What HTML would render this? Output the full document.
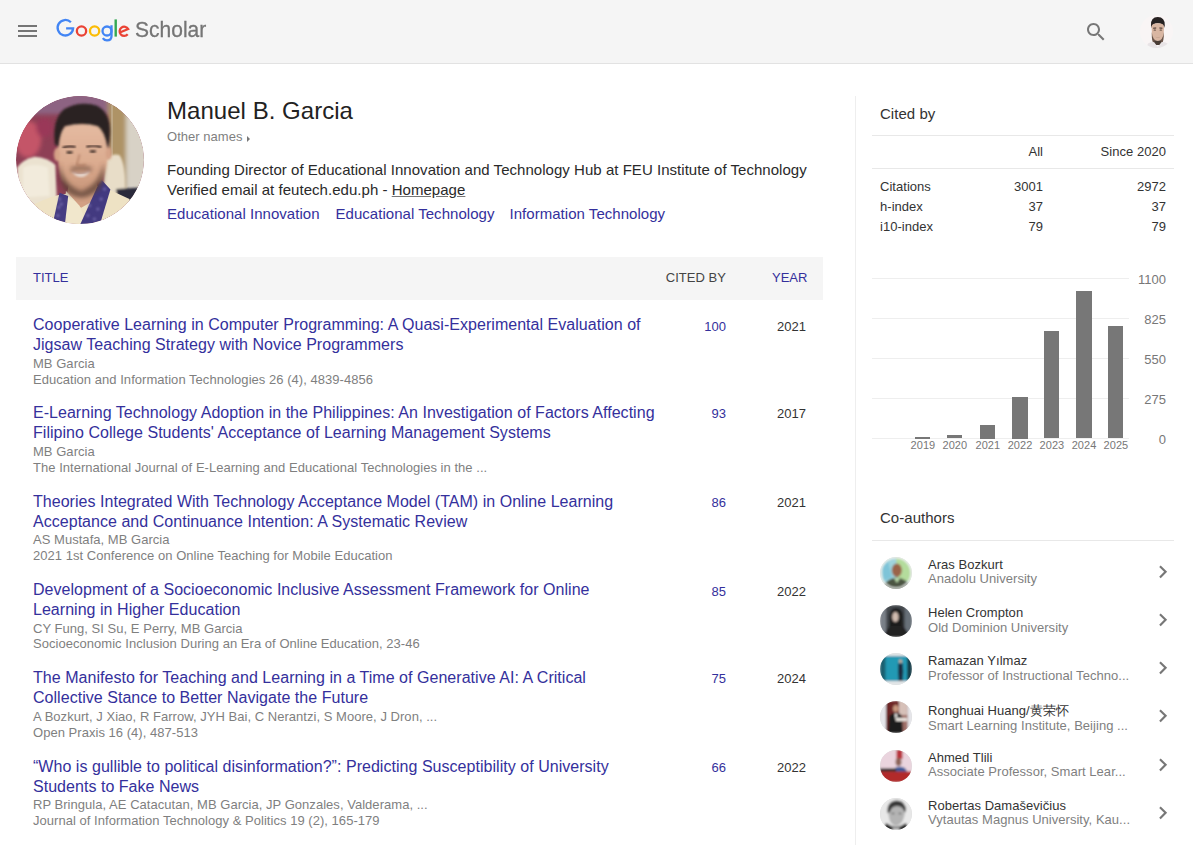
<!DOCTYPE html>
<html><head><meta charset="utf-8">
<style>
*{margin:0;padding:0;box-sizing:border-box}
html,body{width:1193px;height:845px;overflow:hidden;background:#fff}
body{font-family:"Liberation Sans",sans-serif;color:#2e2e2e;position:relative;letter-spacing:0.035px}
.a{position:absolute;white-space:nowrap}
#hdr{position:absolute;left:0;top:0;width:1193px;height:64px;background:#f5f5f5;border-bottom:1px solid #e2e2e2}
.ham{position:absolute;left:18px;width:19px;height:2px;background:#757575}
.lnk{color:#34309c}
.gry{color:#7f7f7f}
.title{color:#34309c;font-size:16px;line-height:20px}
.g1{color:#7f7f7f;font-size:13px;line-height:15.65px}
.cit{left:626px;width:100px;text-align:right;color:#34309c;font-size:13px;line-height:16px}
.yr{left:706px;width:100px;text-align:right;color:#333;font-size:13px;line-height:16px}
.ylab{left:1116px;width:50px;text-align:right;color:#777;font-size:13px;line-height:16px}
.xlab{width:40px;text-align:center;color:#777;font-size:11px;line-height:13px}
.coname{color:#333;font-size:13px;line-height:16px}
.coaff{color:#7f7f7f;font-size:13px;line-height:16px}
.av{width:32px;height:32px;border-radius:50%;overflow:hidden;background:#ddd}
.sth{font-size:13px;line-height:16px;color:#333}
</style></head><body>
<div id="hdr">
  <div class="ham" style="top:25px"></div>
  <div class="ham" style="top:30px"></div>
  <div class="ham" style="top:35px"></div>
  <svg class="a" style="left:50px;top:14.4px" width="84" height="32" viewBox="50 14 84 32">
<path d="M70.9 22.3A7.75 7.75 0 1 0 73.1 28.3H66.1" fill="none" stroke="#4285f4" stroke-width="2.3"/>
<circle cx="81.5" cy="31" r="4.65" fill="none" stroke="#ea4335" stroke-width="2.3"/>
<circle cx="94.6" cy="31" r="4.65" fill="none" stroke="#fbbc05" stroke-width="2.3"/>
<circle cx="107" cy="31" r="4.5" fill="none" stroke="#4285f4" stroke-width="2.3"/>
<path d="M111.5 25.2V36Q111.5 40.4 107 40.4Q104.2 40.4 102.8 38.2" fill="none" stroke="#4285f4" stroke-width="2.3"/>
<rect x="114.5" y="19.4" width="2.4" height="17.2" fill="#34a853"/>
<path d="M120.4 32.2L128.2 29A4.6 4.6 0 1 0 127.7 34.3" fill="none" stroke="#ea4335" stroke-width="2.3"/>
</svg>
<div class="a" style="left:134.5px;top:17px;font-size:22.6px;line-height:26px;color:#757575;letter-spacing:0;transform:scaleX(0.93);transform-origin:0 0;-webkit-text-stroke:0.3px #757575">Scholar</div>
  <div class="a" style="left:1084px;top:20px;width:24px;height:24px"><svg width="24" height="24" viewBox="0 0 24 24"><path fill="#777" d="M15.5 14h-.79l-.28-.27C15.41 12.59 16 11.11 16 9.5 16 5.91 13.09 3 9.5 3S3 5.91 3 9.5 5.91 16 9.5 16c1.610 0 3.09-.59 4.23-1.57l.27.28v.79l5 4.99L20.49 19l-4.99-5zm-6 0C7.01 14 5 11.990 5 9.5S7.01 5 9.5 5 14 7.01 14 9.5 11.99 14 9.5 14z"/></svg></div>
  <div class="a" style="left:1139.5px;top:15px;width:33px;height:33px;border-radius:50%;overflow:hidden"><svg width="33" height="33" viewBox="0 0 33 33"><defs><filter id="fh"><feGaussianBlur stdDeviation="0.55"/></filter></defs><g filter="url(#fh)">
<rect width="33" height="33" fill="#f9f5f5"/>
<path d="M11 10.5 Q10.5 2 17.8 2 Q25 2 24.8 10.5 L24 13 Q23 8.5 17.8 8.3 Q12.5 8.5 11.8 13 Z" fill="#262020"/>
<path d="M11.6 11.5 Q11.8 8.2 17.8 8.2 Q23.8 8.2 24 11.5 L23.6 21 Q22.8 25.5 17.8 26 Q12.8 25.5 12 21 Z" fill="#d9b6a2"/>
<path d="M11.8 17 Q12.5 25.5 17.8 26 Q23 25.5 23.8 17 Q24 27 21.5 29 L14 29 Q11.5 27 11.8 17 Z" fill="#6a5448"/>
<path d="M15 21.5 Q17.8 23.5 20.6 21.5 Q18 24 15 21.5Z" fill="#a08070"/>
<path d="M13.2 13.2 L16.2 13" stroke="#3a2a24" stroke-width="1" />
<path d="M19.4 13 L22.4 13.2" stroke="#3a2a24" stroke-width="1" />
<ellipse cx="14.8" cy="15" rx="1.3" ry="0.6" fill="#4a3a30"/>
<ellipse cx="20.8" cy="15" rx="1.3" ry="0.6" fill="#4a3a30"/>
<path d="M14.5 26 L21 26 L21.5 30 L14 30 Z" fill="#4a3c36"/>
<path d="M6 34 L8 28.5 Q11.5 26.8 14.2 27.2 L17.8 32 L21.4 27.2 Q24.2 26.8 27.5 28.5 L29.5 34 Z" fill="#e8e4e6"/>
</g></svg></div>
</div>

<!-- profile -->
<div class="a" style="left:16px;top:96px;width:128px;height:128px;border-radius:50%;overflow:hidden"><svg width="128" height="128" viewBox="38 40 770 770">
<defs>
<clipPath id="pc"><circle cx="423" cy="425" r="385"/></clipPath>
<linearGradient id="face" x1="0" y1="0" x2="0" y2="1"><stop offset="0" stop-color="#e6bda4"/><stop offset="0.6" stop-color="#dcac90"/><stop offset="1" stop-color="#c8967a"/></linearGradient>
<filter id="bl" x="-20%" y="-20%" width="140%" height="140%"><feGaussianBlur stdDeviation="12"/></filter>
<filter id="bl2"><feGaussianBlur stdDeviation="5"/></filter>
<filter id="bl3"><feGaussianBlur stdDeviation="14"/></filter>
</defs>
<g clip-path="url(#pc)">
<rect x="0" y="0" width="900" height="900" fill="#8e3f55"/>
<g filter="url(#bl)">
<rect x="0" y="0" width="620" height="150" fill="#8d6482"/>
<ellipse cx="110" cy="300" rx="80" ry="110" fill="#c45468"/>
<ellipse cx="210" cy="230" rx="50" ry="60" fill="#9a3858"/>
<ellipse cx="220" cy="560" rx="60" ry="90" fill="#7a3048"/>
<rect x="590" y="60" width="120" height="620" fill="#ae9366"/>
<rect x="700" y="60" width="140" height="620" fill="#d8d2c6"/>
</g>
<rect x="612" y="90" width="8" height="560" fill="#e0d8cc" opacity="0.8" filter="url(#bl2)"/>
<g filter="url(#bl2)">
<path d="M45 470 Q80 420 150 405 Q230 410 275 455 L285 700 L45 700 Z" fill="#ebe2d0"/>
<path d="M80 470 Q150 440 230 470 L240 640 L80 650 Z" fill="#f2ebdc"/>
<path d="M565 430 Q605 380 660 395 Q700 450 695 620 L565 640 Z" fill="#e8ddc8"/>
<path d="M640 600 L790 590 L810 665 L650 672 Z" fill="#2a2a3a"/>
</g>
<path d="M150 690 Q250 640 330 630 L540 580 Q640 620 720 660 L760 860 L120 860 Z" fill="#eee2c4"/>
<path d="M360 540 L520 540 L538 650 L430 712 L342 650 Z" fill="#d2a084"/>
<path d="M338 610 L420 700 L470 820 L338 820 Z" fill="#f1e7cc"/>
<path d="M300 622 L352 642 L332 812 L258 812 Z" fill="#463c82"/>
<path d="M548 540 L606 602 L540 822 L420 822 Z" fill="#433a80"/>
<g filter="url(#bl2)"><circle cx="300" cy="660" r="9" fill="#8a80c0" opacity="0.7"/><circle cx="295" cy="710" r="9" fill="#8a80c0" opacity="0.7"/><circle cx="290" cy="760" r="9" fill="#8a80c0" opacity="0.7"/><circle cx="570" cy="600" r="9" fill="#8a80c0" opacity="0.7"/><circle cx="550" cy="660" r="9" fill="#8a80c0" opacity="0.7"/><circle cx="530" cy="720" r="9" fill="#8a80c0" opacity="0.7"/><circle cx="510" cy="780" r="9" fill="#8a80c0" opacity="0.7"/><circle cx="480" cy="700" r="9" fill="#8a80c0" opacity="0.7"/><circle cx="470" cy="760" r="9" fill="#8a80c0" opacity="0.7"/><circle cx="310" cy="690" r="9" fill="#8a80c0" opacity="0.7"/></g>
<g filter="url(#bl2)">
<path d="M290 330 Q292 225 335 195 Q430 150 535 195 Q592 235 592 340 Q595 470 555 548 Q495 612 430 614 Q358 612 314 545 Q285 470 290 330 Z" fill="url(#face)"/>
<ellipse cx="284" cy="392" rx="18" ry="40" fill="#d6a388"/>
<ellipse cx="596" cy="384" rx="18" ry="40" fill="#d6a388"/>
</g>
<g filter="url(#bl3)" opacity="0.75">
<path d="M300 440 Q320 575 430 612 Q540 575 565 440 Q575 560 530 610 Q480 650 430 652 Q370 648 330 605 Q295 560 300 440 Z" fill="#5c4034"/>
<path d="M370 470 Q430 455 490 470 L495 490 Q430 478 365 492 Z" fill="#6a4a3a"/>
</g>
<g filter="url(#bl2)">
<path d="M272 330 Q255 175 330 118 Q425 68 525 98 Q605 140 603 255 Q602 315 590 355 Q572 250 530 222 Q440 195 332 222 Q300 262 292 345 Z" fill="#2a2220"/>
</g>
<path d="M322 352 Q352 336 392 346" stroke="#3a2823" stroke-width="13" fill="none" stroke-linecap="round" filter="url(#bl2)"/>
<path d="M466 344 Q505 332 546 347" stroke="#3a2823" stroke-width="13" fill="none" stroke-linecap="round" filter="url(#bl2)"/>
<ellipse cx="360" cy="380" rx="20" ry="8" fill="#3a2a25" filter="url(#bl2)"/>
<ellipse cx="500" cy="374" rx="20" ry="8" fill="#3a2a25" filter="url(#bl2)"/>
<path d="M420 390 Q412 430 402 452 Q428 466 458 452" stroke="#b07c62" stroke-width="8" fill="none" filter="url(#bl2)"/>
<path d="M372 490 Q428 522 486 486 Q466 526 428 528 Q392 526 372 490 Z" fill="#e6d8d0" filter="url(#bl2)"/>
<path d="M372 490 Q428 522 486 486" stroke="#8a5a50" stroke-width="6" fill="none" filter="url(#bl2)"/>
</g>
</svg></div>
<div class="a" style="left:167px;top:96px;font-size:24px;line-height:30px;color:#222">Manuel B. Garcia</div>
<div class="a gry" style="left:167px;top:129px;font-size:13px;line-height:16px">Other names</div><div class="a" style="left:246.5px;top:136px;width:0;height:0;border-left:3.5px solid #777;border-top:3px solid transparent;border-bottom:3px solid transparent"></div>
<div class="a" style="left:167px;top:160px;font-size:15px;line-height:20px;color:#2a2a2a">Founding Director of Educational Innovation and Technology Hub at FEU Institute of Technology<br>Verified email at feutech.edu.ph - <u style="text-decoration-color:#777;text-underline-offset:1px">Homepage</u></div>
<div class="a lnk" style="left:167px;top:204px;font-size:15px;line-height:20px">Educational Innovation</div><div class="a lnk" style="left:335.5px;top:204px;font-size:15px;line-height:20px">Educational Technology</div><div class="a lnk" style="left:509.5px;top:204px;font-size:15px;line-height:20px">Information Technology</div>

<!-- table header -->
<div class="a" style="left:16px;top:257px;width:807px;height:43px;background:#f5f5f5"></div>
<div class="a lnk" style="left:33px;top:270px;font-size:13px;line-height:16px">TITLE</div>
<div class="a" style="left:600px;width:126px;text-align:right;top:270px;font-size:13px;line-height:16px;color:#444">CITED BY</div>
<div class="a lnk" style="left:701.5px;width:106px;text-align:right;top:270px;font-size:13px;line-height:16px">YEAR</div>

<div class="a title" style="left:33px;top:314.65px">Cooperative Learning in Computer Programming: A Quasi-Experimental Evaluation of<br>Jigsaw Teaching Strategy with Novice Programmers</div>
<div class="a g1" style="left:33px;top:356.25px">MB Garcia<br>Education and Information Technologies 26 (4), 4839-4856</div>
<div class="a cit" style="top:318.65px">100</div>
<div class="a yr" style="top:318.65px">2021</div>
<div class="a title" style="left:33px;top:403.20px">E-Learning Technology Adoption in the Philippines: An Investigation of Factors Affecting<br>Filipino College Students' Acceptance of Learning Management Systems</div>
<div class="a g1" style="left:33px;top:444.25px">MB Garcia<br>The International Journal of E-Learning and Educational Technologies in the ...</div>
<div class="a cit" style="top:406.20px">93</div>
<div class="a yr" style="top:406.20px">2017</div>
<div class="a title" style="left:33px;top:491.80px">Theories Integrated With Technology Acceptance Model (TAM) in Online Learning<br>Acceptance and Continuance Intention: A Systematic Review</div>
<div class="a g1" style="left:33px;top:532.25px">AS Mustafa, MB Garcia<br>2021 1st Conference on Online Teaching for Mobile Education</div>
<div class="a cit" style="top:494.90px">86</div>
<div class="a yr" style="top:494.90px">2021</div>
<div class="a title" style="left:33px;top:579.55px">Development of a Socioeconomic Inclusive Assessment Framework for Online<br>Learning in Higher Education</div>
<div class="a g1" style="left:33px;top:620.70px">CY Fung, SI Su, E Perry, MB Garcia<br>Socioeconomic Inclusion During an Era of Online Education, 23-46</div>
<div class="a cit" style="top:583.50px">85</div>
<div class="a yr" style="top:583.50px">2022</div>
<div class="a title" style="left:33px;top:667.80px">The Manifesto for Teaching and Learning in a Time of Generative AI: A Critical<br>Collective Stance to Better Navigate the Future</div>
<div class="a g1" style="left:33px;top:708.90px">A Bozkurt, J Xiao, R Farrow, JYH Bai, C Nerantzi, S Moore, J Dron, ...<br>Open Praxis 16 (4), 487-513</div>
<div class="a cit" style="top:671.30px">75</div>
<div class="a yr" style="top:671.30px">2024</div>
<div class="a title" style="left:33px;top:757.25px">“Who is gullible to political disinformation?”: Predicting Susceptibility of University<br>Students to Fake News</div>
<div class="a g1" style="left:33px;top:797.25px">RP Bringula, AE Catacutan, MB Garcia, JP Gonzales, Valderama, ...<br>Journal of Information Technology &amp; Politics 19 (2), 165-179</div>
<div class="a cit" style="top:759.70px">66</div>
<div class="a yr" style="top:759.70px">2022</div>
<div class="a title" style="left:33px;top:845.70px">Can ChatGPT Pass the Licensure Examination? A Comparative Study of Generative AI<br>in Education</div>
<div class="a g1" style="left:33px;top:885.50px">MB Garcia<br>Journal</div>
<div class="a cit" style="top:848.00px">60</div>
<div class="a yr" style="top:848.00px">2024</div>

<!-- sidebar -->
<div class="a" style="left:855px;top:96px;width:1px;height:749px;background:#eee"></div>
<div class="a" style="left:880px;top:105px;font-size:15px;line-height:18px;color:#333">Cited by</div>
<div class="a" style="left:872px;top:135px;width:302px;height:1px;background:#e8e8e8"></div>
<div class="a sth" style="left:943px;width:100px;text-align:right;top:144px">All</div>
<div class="a sth" style="left:1066px;width:100px;text-align:right;top:144px">Since 2020</div>
<div class="a" style="left:872px;top:168px;width:302px;height:1px;background:#e8e8e8"></div>
<div class="a sth" style="left:880px;top:177px;line-height:20px">Citations<br>h-index<br>i10-index</div>
<div class="a sth" style="left:943px;width:100px;text-align:right;top:177px;line-height:20px">3001<br>37<br>79</div>
<div class="a sth" style="left:1066px;width:100px;text-align:right;top:177px;line-height:20px">2972<br>37<br>79</div>

<div class="a" style="left:872px;top:278px;width:257px;height:1px;background:#eee"></div>
<div class="a ylab" style="top:271.5px">1100</div>
<div class="a" style="left:872px;top:318px;width:257px;height:1px;background:#eee"></div>
<div class="a ylab" style="top:311.5px">825</div>
<div class="a" style="left:872px;top:358px;width:257px;height:1px;background:#eee"></div>
<div class="a ylab" style="top:351.5px">550</div>
<div class="a" style="left:872px;top:398px;width:257px;height:1px;background:#eee"></div>
<div class="a ylab" style="top:391.5px">275</div>
<div class="a" style="left:872px;top:438px;width:257px;height:1px;background:#eee"></div>
<div class="a ylab" style="top:431.5px">0</div>
<div class="a" style="left:915.3px;top:436.5px;width:15.2px;height:2.0px;background:#777"></div>
<div class="a xlab" style="left:902.9px;top:439px">2019</div>
<div class="a" style="left:947.2px;top:434.7px;width:15.2px;height:3.8px;background:#777"></div>
<div class="a xlab" style="left:934.8px;top:439px">2020</div>
<div class="a" style="left:980.2px;top:425.0px;width:15.2px;height:13.5px;background:#777"></div>
<div class="a xlab" style="left:967.8px;top:439px">2021</div>
<div class="a" style="left:1012.4px;top:396.5px;width:15.2px;height:42.0px;background:#777"></div>
<div class="a xlab" style="left:1000.0px;top:439px">2022</div>
<div class="a" style="left:1044.3px;top:331.3px;width:15.2px;height:107.2px;background:#777"></div>
<div class="a xlab" style="left:1031.9px;top:439px">2023</div>
<div class="a" style="left:1076.4px;top:291.3px;width:15.2px;height:147.2px;background:#777"></div>
<div class="a xlab" style="left:1064.0px;top:439px">2024</div>
<div class="a" style="left:1108.3px;top:326.2px;width:15.2px;height:112.3px;background:#777"></div>
<div class="a xlab" style="left:1095.9px;top:439px">2025</div>

<div class="a" style="left:880px;top:509px;font-size:15px;line-height:18px;color:#333">Co-authors</div>
<div class="a" style="left:872px;top:540px;width:302px;height:1px;background:#e8e8e8"></div>
<div class="a av" style="left:880px;top:556.8px"><svg width="32" height="32" viewBox="0 0 32 32"><defs><filter id="f1"><feGaussianBlur stdDeviation="0.9"/></filter></defs><g filter="url(#f1)">
<rect width="32" height="32" fill="#e6efe8"/>
<circle cx="16" cy="16" r="14.8" fill="#9fd4de"/>
<path d="M16 1 A15 15 0 0 1 31 16 L31 24 L18 24 Z" fill="#b4dc9c"/>
<path d="M2 10 L8 4 L12 20 L4 24 Z" fill="#7ec4d8"/>
<ellipse cx="16.8" cy="13.2" rx="5" ry="6.8" fill="#9a6448"/>
<path d="M3 29 Q8 21 16.5 20.5 Q25 21 30 28 L30 34 L3 34 Z" fill="#4c5442"/>
<path d="M14 21 L17 26 L20 21 Z" fill="#b8d8a8"/>
<circle cx="16" cy="16" r="15.2" fill="none" stroke="#eef2ee" stroke-width="1.6"/>
</g></svg></div>
<div class="a coname" style="left:928px;top:556.8px">Aras Bozkurt</div>
<div class="a coaff" style="left:928px;top:571.3px">Anadolu University</div>
<div class="a" style="left:1149.8px;top:558.8px;width:26px;height:26px;line-height:0"><svg width="25.7" height="25.7" viewBox="0 0 24 24"><path d="M10 6L8.59 7.41 13.17 12l-4.58 4.59L10 18l6-6z" fill="#777"/></svg></div>
<div class="a av" style="left:880px;top:605.0px"><svg width="32" height="32" viewBox="0 0 32 32"><defs><filter id="f2"><feGaussianBlur stdDeviation="0.9"/></filter></defs><g filter="url(#f2)">
<rect width="32" height="32" fill="#44484e"/>
<rect x="0" y="0" width="6" height="32" fill="#7a8088"/>
<rect x="25" y="0" width="7" height="32" fill="#687078"/>
<path d="M9 30 L9.5 10 Q10.5 3 16 3 Q22 3 23 10 L23.5 30 Z" fill="#1c1c1e"/>
<ellipse cx="15.4" cy="12" rx="3.2" ry="5" fill="#d2bcb0"/>
<path d="M4 32 Q6 22 12 21 L20 21 Q27 22 29 32 Z" fill="#222224"/>
</g></svg></div>
<div class="a coname" style="left:928px;top:605.0px">Helen Crompton</div>
<div class="a coaff" style="left:928px;top:619.5px">Old Dominion University</div>
<div class="a" style="left:1149.8px;top:607.0px;width:26px;height:26px;line-height:0"><svg width="25.7" height="25.7" viewBox="0 0 24 24"><path d="M10 6L8.59 7.41 13.17 12l-4.58 4.59L10 18l6-6z" fill="#777"/></svg></div>
<div class="a av" style="left:880px;top:653.2px"><svg width="32" height="32" viewBox="0 0 32 32"><defs><filter id="f3"><feGaussianBlur stdDeviation="0.9"/></filter></defs><g filter="url(#f3)">
<rect width="32" height="32" fill="#e2e6e8"/>
<rect x="0" y="3" width="32" height="25" fill="#2299b4"/>
<rect x="0" y="3" width="5.5" height="25" fill="#1d5f70"/>
<rect x="27" y="3" width="5" height="25" fill="#153c48"/>
<ellipse cx="20.5" cy="8.3" rx="1.6" ry="2" fill="#c8a890"/>
<path d="M18.2 10.5 L22.8 10.5 L23.3 19 L22.5 28 L18.8 28 L18 19 Z" fill="#1c2a40"/>
</g></svg></div>
<div class="a coname" style="left:928px;top:653.2px">Ramazan Yılmaz</div>
<div class="a coaff" style="left:928px;top:667.7px">Professor of Instructional Techno...</div>
<div class="a" style="left:1149.8px;top:655.2px;width:26px;height:26px;line-height:0"><svg width="25.7" height="25.7" viewBox="0 0 24 24"><path d="M10 6L8.59 7.41 13.17 12l-4.58 4.59L10 18l6-6z" fill="#777"/></svg></div>
<div class="a av" style="left:880px;top:701.4px"><svg width="32" height="32" viewBox="0 0 32 32"><defs><filter id="f4"><feGaussianBlur stdDeviation="0.9"/></filter></defs><g filter="url(#f4)">
<rect width="32" height="32" fill="#e6e6ea"/>
<rect x="6" y="0" width="21.3" height="32" fill="#6e2826"/>
<rect x="19" y="0" width="8.3" height="14" fill="#d6c0b8"/>
<rect x="20" y="14" width="7.3" height="18" fill="#a07068"/>
<ellipse cx="15.8" cy="7.5" rx="2.8" ry="3.5" fill="#c89a80"/>
<path d="M8 32 L9 16 Q10 12 16 12 Q21 12 22 16 L23 32 Z" fill="#1e1c1e"/>
<path d="M14.5 12.5 L16 20 L17.5 12.5 Z" fill="#f0ece8"/>
<rect x="16" y="17" width="11" height="3" fill="#ece6e0"/>
</g></svg></div>
<div class="a coname" style="left:928px;top:703.2px">Ronghuai Huang/黄荣怀</div>
<div class="a coaff" style="left:928px;top:717.7px">Smart Learning Institute, Beijing ...</div>
<div class="a" style="left:1149.8px;top:703.4px;width:26px;height:26px;line-height:0"><svg width="25.7" height="25.7" viewBox="0 0 24 24"><path d="M10 6L8.59 7.41 13.17 12l-4.58 4.59L10 18l6-6z" fill="#777"/></svg></div>
<div class="a av" style="left:880px;top:749.6px"><svg width="32" height="32" viewBox="0 0 32 32"><defs><filter id="f5"><feGaussianBlur stdDeviation="0.9"/></filter></defs><g filter="url(#f5)">
<rect width="32" height="32" fill="#ead4de"/>
<rect x="16.5" y="0" width="6" height="9" fill="#b8323a"/>
<ellipse cx="18.5" cy="12" rx="3" ry="4" fill="#8c6458"/>
<path d="M14 27 L15 18 Q18 16 22 17 Q27 18 27.5 24 L28 28 Z" fill="#3a5898"/>
<rect x="0" y="18.5" width="16" height="3.2" fill="#1e1a1a"/>
<path d="M0 21.5 L32 21.5 L32 32 L0 32 Z" fill="#b22a2c"/>
</g></svg></div>
<div class="a coname" style="left:928px;top:749.6px">Ahmed Tlili</div>
<div class="a coaff" style="left:928px;top:764.1px">Associate Professor, Smart Lear...</div>
<div class="a" style="left:1149.8px;top:751.6px;width:26px;height:26px;line-height:0"><svg width="25.7" height="25.7" viewBox="0 0 24 24"><path d="M10 6L8.59 7.41 13.17 12l-4.58 4.59L10 18l6-6z" fill="#777"/></svg></div>
<div class="a av" style="left:880px;top:797.8px"><svg width="32" height="32" viewBox="0 0 32 32"><defs><filter id="f6"><feGaussianBlur stdDeviation="0.9"/></filter></defs><g filter="url(#f6)">
<rect width="32" height="32" fill="#e8e8e8"/>
<path d="M8 14 Q8 4 17 3.5 Q25 4 25.5 13 L24 19 Q22 27 16 28 Q10 27 9 19 Z" fill="#b4b4b4"/>
<path d="M7.5 15 Q6.5 3 17 2.5 Q26 3 26 13 L24.5 14 Q23 8 17 8 Q11 8.5 10 14 Z" fill="#383838"/>
<ellipse cx="13" cy="15.5" rx="1.5" ry="0.8" fill="#555"/>
<ellipse cx="20" cy="15.5" rx="1.5" ry="0.8" fill="#555"/>
<path d="M3 32 L6 25 Q10 28 16 29 Q22 28 26 25 L29 32 Z" fill="#2a2a2a"/>
<path d="M12 29 L16 31 L20 29 L18 32 L14 32 Z" fill="#f4f4f4"/>
</g></svg></div>
<div class="a coname" style="left:928px;top:797.8px">Robertas Damaševičius</div>
<div class="a coaff" style="left:928px;top:812.3px">Vytautas Magnus University, Kau...</div>
<div class="a" style="left:1149.8px;top:799.8px;width:26px;height:26px;line-height:0"><svg width="25.7" height="25.7" viewBox="0 0 24 24"><path d="M10 6L8.59 7.41 13.17 12l-4.58 4.59L10 18l6-6z" fill="#777"/></svg></div>
</body></html>
